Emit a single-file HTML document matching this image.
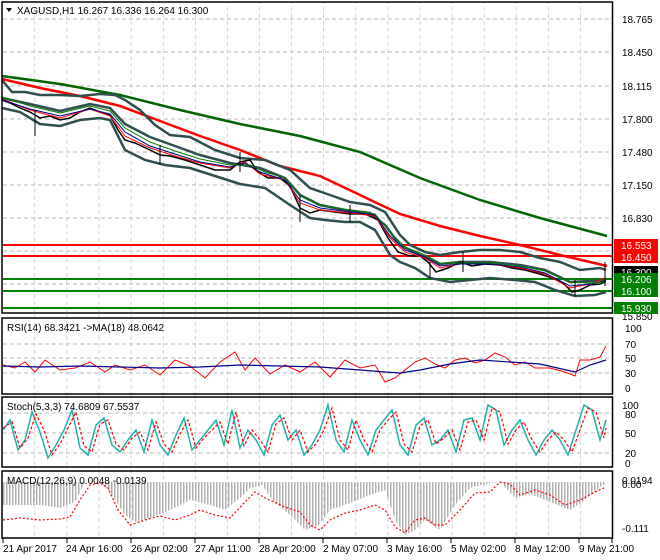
<!DOCTYPE html>
<html><head><meta charset="utf-8"><style>
html,body{margin:0;padding:0;background:#fff;width:660px;height:560px;overflow:hidden}
svg{display:block}
text{font-family:"Liberation Sans",sans-serif;font-size:10px}
</style></head><body>
<svg width="660" height="560" viewBox="0 0 660 560" xmlns="http://www.w3.org/2000/svg">
<defs>
<pattern id="vg" x="3" y="0" width="32.1" height="560" patternUnits="userSpaceOnUse">
<line x1="32" y1="0" x2="32" y2="560" stroke="#b8b8b8" stroke-dasharray="4,3"/>
</pattern>
<pattern id="hb" x="0" y="0" width="3" height="10" patternUnits="userSpaceOnUse">
<rect x="0" y="0" width="1.5" height="10" fill="#b0b0b0"/>
</pattern>
</defs>
<rect width="660" height="560" fill="#fff"/>
<rect x="3" y="3" width="609" height="535" fill="url(#vg)"/>
<g stroke="#b8b8b8" stroke-dasharray="4,3">
<line x1="3" y1="19" x2="612" y2="19"/><line x1="3" y1="52" x2="612" y2="52"/><line x1="3" y1="86" x2="612" y2="86"/>
<line x1="3" y1="119" x2="612" y2="119"/><line x1="3" y1="152" x2="612" y2="152"/><line x1="3" y1="185" x2="612" y2="185"/>
<line x1="3" y1="218" x2="612" y2="218"/><line x1="3" y1="251" x2="612" y2="251"/><line x1="3" y1="284" x2="612" y2="284"/>
<line x1="3" y1="344" x2="612" y2="344"/><line x1="3" y1="373" x2="612" y2="373"/>
<line x1="3" y1="413" x2="612" y2="413"/><line x1="3" y1="433" x2="612" y2="433"/><line x1="3" y1="453" x2="612" y2="453"/>
</g>
<g stroke-width="2">
<line x1="3" y1="245" x2="612" y2="245" stroke="#f00"/>
<line x1="3" y1="256" x2="612" y2="256" stroke="#f00"/>
<line x1="3" y1="279" x2="612" y2="279" stroke="#008000"/>
<line x1="3" y1="291" x2="612" y2="291" stroke="#008000"/>
<line x1="3" y1="308" x2="612" y2="308" stroke="#008000"/>
</g>
<polyline fill="none" stroke="#006400" stroke-width="2.5" points="2,76 60,84 120,95 180,110 240,124 300,136 360,152 420,178 480,200 540,218 607,236"/>
<polyline fill="none" stroke="#f00" stroke-width="2.5" points="2,79 40,88 80,96 120,106 160,121 200,136 240,150 280,166 320,176 360,195 400,214 440,226 480,236 520,245 560,255 607,266"/>
<g fill="none" stroke="#2f4f4f" stroke-width="2.5">
<polyline points="2,80 12,92 25,92 40,95 60,95 80,96 100,94 115,95 125,100 140,110 155,125 170,135 190,137 215,150 240,158 265,160 290,170 310,188 330,195 350,202 370,205 385,212 400,235 410,245 425,252 440,255 460,252 480,250 500,250 520,252 540,258 560,262 580,270 600,268 606,270"/>
<polyline points="2,108 20,112 40,124 60,126 80,120 100,118 110,120 125,150 145,160 165,165 190,168 215,176 240,184 265,188 290,205 310,218 325,220 345,222 360,222 375,230 390,255 400,262 415,268 430,278 450,282 470,280 490,278 515,280 535,282 555,290 575,296 595,295 606,292"/>
<polyline points="2,98 30,104 60,111 90,104 110,108 125,124 150,137 175,146 200,155 230,163 260,168 285,178 300,195 320,205 345,210 370,213 385,225 400,245 420,255 440,264 460,262 490,262 520,265 545,270 570,282 590,281 606,280"/>
</g>
<polyline fill="none" stroke="#000" stroke-width="1.5" points="2,100 10,103 20,108 30,112 40,118 50,116 60,120 70,118 80,112 90,108 100,112 110,115 118,130 125,140 135,143 150,150 160,155 170,156 185,160 200,165 215,170 230,170 240,162 250,160 258,172 268,178 280,178 290,186 300,208 310,213 320,210 335,212 350,214 365,214 378,220 388,238 398,252 410,256 420,256 428,262 436,272 448,268 460,262 472,266 485,264 500,265 512,268 525,270 540,274 552,278 562,282 572,292 580,290 590,285 600,284 605,282"/>
<polyline fill="none" stroke="#f00" stroke-width="1" points="2,99 30,110 60,118 90,109 110,116 125,136 150,148 175,156 200,163 230,168 245,162 260,174 285,180 300,203 320,210 350,213 375,216 390,238 405,252 425,258 440,268 460,264 490,264 520,268 545,274 570,288 590,284 606,278"/>
<polyline fill="none" stroke="#00008b" stroke-width="1" points="2,100 30,109 60,116 90,109 110,114 125,132 150,146 175,154 200,162 230,167 245,163 260,172 285,180 300,200 320,208 350,212 375,215 390,236 405,250 425,257 440,266 460,264 490,264 520,267 545,273 570,286 590,284 606,281"/>
<polyline fill="none" stroke="#008000" stroke-width="1" points="2,97 30,106 60,113 90,106 110,111 125,128 150,142 175,151 200,159 230,165 250,165 265,172 285,178 300,196 320,205 350,210 375,214 390,232 405,247 425,255 440,263 460,263 490,263 520,266 545,271 570,282 590,283 606,282"/>
<g stroke="#000" stroke-width="1">
<line x1="35" y1="110" x2="35" y2="136"/><line x1="160" y1="145" x2="160" y2="165"/><line x1="300" y1="195" x2="300" y2="222"/>
<line x1="350" y1="205" x2="350" y2="222"/><line x1="430" y1="262" x2="430" y2="278"/><line x1="463" y1="252" x2="463" y2="272"/>
<line x1="575" y1="280" x2="575" y2="296"/><line x1="605" y1="262" x2="605" y2="286"/><line x1="240" y1="152" x2="240" y2="172"/>
</g>
<line x1="3" y1="358" x2="612" y2="358" stroke="#b8b8b8" stroke-dasharray="4,3"/>
<polyline fill="none" stroke="#f00" stroke-width="1" points="3,365 15,368 25,362 35,372 45,360 60,370 75,368 90,362 105,372 115,365 130,370 145,365 160,375 175,360 190,366 205,378 220,362 235,352 245,370 255,358 270,374 285,365 300,372 315,362 330,377 345,360 360,368 375,365 385,382 395,378 405,370 415,362 425,358 435,364 445,368 455,360 465,358 475,363 485,360 495,353 505,357 515,365 525,362 535,368 550,368 565,372 575,376 580,360 590,360 600,357 606,346"/>
<polyline fill="none" stroke="#00008b" stroke-width="1.2" points="3,366 40,367 80,366 120,367 160,368 200,367 240,365 280,366 320,367 360,370 385,372 400,373 420,370 450,364 480,360 510,362 540,364 575,372 590,365 606,360"/>
<polyline fill="none" stroke="#20b2aa" stroke-width="1.5" points="3,430 10,420 18,450 25,440 32,412 40,432 48,458 56,445 64,430 72,410 80,448 88,455 96,425 104,418 112,445 120,452 128,440 136,430 144,452 152,420 160,445 168,455 176,435 184,418 192,450 200,440 208,430 216,420 224,445 232,410 240,448 248,430 256,440 264,455 272,425 280,415 288,440 296,430 304,455 312,445 320,430 328,405 336,440 344,452 352,420 360,440 368,455 376,430 384,420 392,410 400,445 408,455 416,425 424,418 432,445 440,440 448,430 456,452 464,420 472,418 480,440 488,405 496,410 504,445 512,430 520,420 528,440 536,455 544,440 552,430 560,440 568,455 576,430 584,405 592,410 600,440 606,420"/>
<polyline fill="none" stroke="#f00" stroke-width="1.2" stroke-dasharray="3,2" points="3,428 12,422 20,448 28,438 36,414 44,430 52,455 60,444 68,428 76,412 84,446 92,452 100,424 108,420 116,444 124,450 132,438 140,432 148,450 156,422 164,444 172,452 180,434 188,420 196,448 204,438 212,430 220,422 228,444 236,412 244,446 252,430 260,440 268,452 276,424 284,418 292,440 300,430 308,452 316,444 324,430 332,408 340,440 348,450 356,420 364,440 372,452 380,430 388,420 396,412 404,444 412,452 420,426 428,420 436,444 444,438 452,430 460,450 468,422 476,420 484,440 492,408 500,412 508,444 516,430 524,422 532,440 540,452 548,440 556,432 564,440 572,452 580,430 588,408 596,412 604,438 606,428"/>
<polygon fill="url(#hb)" points="3,482 3,505 40,505 60,508 75,502 85,482 100,482 110,492 125,515 135,522 150,518 170,510 190,500 210,505 225,510 240,498 250,488 262,485 272,500 290,515 305,530 318,526 330,510 350,503 370,495 385,490 395,520 405,535 415,530 425,520 440,530 455,505 470,488 485,484 500,482 515,498 530,494 550,502 570,510 585,500 600,487 606,483 606,482"/>
<polyline fill="none" stroke="#f00" stroke-width="1.2" stroke-dasharray="2,2" points="3,520 20,518 40,520 60,519 70,517 80,500 90,485 100,483 108,488 118,510 130,525 145,520 160,516 175,520 190,515 200,510 215,515 230,518 245,502 255,492 265,498 285,507 300,512 310,525 320,530 330,520 345,513 360,510 375,505 385,510 395,527 405,533 415,520 425,518 435,525 445,525 460,510 475,493 490,492 500,482 510,484 520,495 535,490 550,495 565,505 580,500 595,492 606,487"/>
<g fill="none" stroke="#000" stroke-width="1.5">
<rect x="2" y="2" width="610.5" height="311"/>
<rect x="2" y="318" width="610.5" height="76"/>
<rect x="2" y="397" width="610.5" height="70"/>
<rect x="2" y="471" width="610.5" height="67"/>
</g>
<g fill="#000">
<text x="622" y="23">18.765</text><text x="622" y="56">18.450</text><text x="622" y="90">18.115</text>
<text x="622" y="123">17.800</text><text x="622" y="156">17.480</text><text x="622" y="189">17.150</text>
<text x="622" y="222">16.830</text><text x="622" y="320">15.850</text>
<text x="625" y="332">100</text><text x="625" y="348">70</text><text x="625" y="362">50</text><text x="625" y="377">30</text><text x="625" y="392">0</text>
<text x="622" y="409">100</text><text x="625" y="418">80</text><text x="625" y="437">50</text><text x="625" y="457">20</text><text x="625" y="467">0</text>
<text x="622" y="484">0.0194</text><text x="622" y="488">0.00</text><text x="622" y="532">-0.111</text>
</g>
<rect x="614" y="239" width="44" height="12" fill="#f00"/><text x="621" y="249" fill="#fff">16.553</text>
<rect x="614" y="251" width="44" height="12" fill="#f00"/><text x="621" y="261" fill="#fff">16.450</text>
<rect x="614" y="266" width="44" height="12" fill="#000"/><text x="621" y="276" fill="#fff">16.300</text>
<rect x="614" y="273" width="44" height="12" fill="#008000"/><text x="621" y="283" fill="#fff">16.206</text>
<rect x="614" y="285" width="44" height="12" fill="#008000"/><text x="621" y="295" fill="#fff">16.100</text>
<rect x="614" y="302" width="44" height="12" fill="#008000"/><text x="621" y="312" fill="#fff">15.930</text>
<path d="M6,8 L12,8 L9,12 Z" fill="#000"/>
<text x="17" y="14" fill="#000">XAGUSD,H1  16.267 16.336 16.264 16.300</text>
<text x="7" y="331" fill="#000">RSI(14) 68.3421  -&gt;MA(18) 48.0642</text>
<text x="7" y="410" fill="#000">Stoch(5,3,3) 74.6809 67.5537</text>
<text x="7" y="484" fill="#000">MACD(12,26,9) 0.0048 -0.0139</text>
<g fill="#000">
<text x="3" y="552">21 Apr 2017</text><text x="66" y="552">24 Apr 16:00</text><text x="131" y="552">26 Apr 02:00</text>
<text x="195" y="552">27 Apr 11:00</text><text x="259" y="552">28 Apr 20:00</text><text x="323" y="552">2 May 07:00</text>
<text x="387" y="552">3 May 16:00</text><text x="451" y="552">5 May 02:00</text><text x="515" y="552">8 May 12:00</text>
<text x="579" y="552">9 May 21:00</text>
</g>
<g stroke="#000"><line x1="3" y1="538" x2="3" y2="543"/><line x1="67" y1="538" x2="67" y2="543"/><line x1="131" y1="538" x2="131" y2="543"/><line x1="195" y1="538" x2="195" y2="543"/><line x1="259" y1="538" x2="259" y2="543"/><line x1="323" y1="538" x2="323" y2="543"/><line x1="387" y1="538" x2="387" y2="543"/><line x1="451" y1="538" x2="451" y2="543"/><line x1="515" y1="538" x2="515" y2="543"/><line x1="579" y1="538" x2="579" y2="543"/><line x1="612" y1="538" x2="612" y2="543"/></g>
</svg>
</body></html>
